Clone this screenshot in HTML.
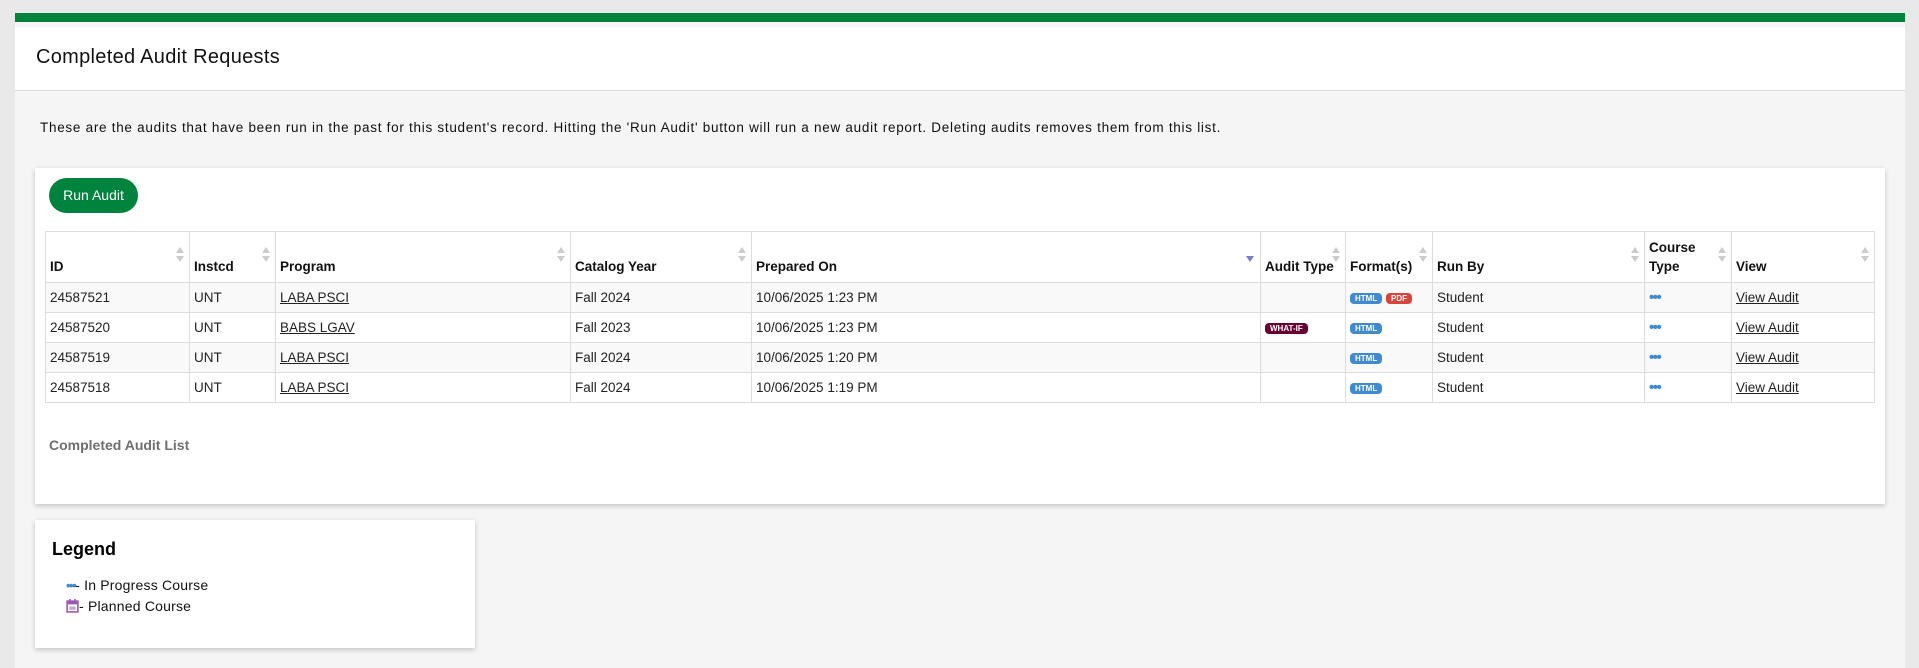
<!DOCTYPE html>
<html><head><meta charset="utf-8"><style>
*{box-sizing:border-box;margin:0;padding:0}
body{width:1919px;height:668px;background:#e9e9e9;font-family:"Liberation Sans",sans-serif;color:#222;position:relative;overflow:hidden}
.page{position:absolute;left:15px;top:13px;width:1890px;height:655px;background:#f5f5f5}
.green{position:absolute;left:0;top:0;width:100%;height:9px;background:#00843d}
.hdr{position:absolute;left:0;top:14px;width:100%;height:64px;background:#fff;border-bottom:1px solid #ddd}
.hdr h1{position:absolute;left:21px;top:19px;font-size:20px;font-weight:normal;color:#111;letter-spacing:0.3px}
.desc{position:absolute;left:25px;top:107px;font-size:13.5px;color:#111;letter-spacing:0.72px}
.card{position:absolute;left:20px;top:155px;width:1850px;height:336px;background:#fff;box-shadow:0 2px 5px rgba(0,0,0,.2)}
.btn{position:absolute;left:14px;top:10px;width:89px;height:35px;border-radius:18px;background:#00843d;color:#fff;font-size:14px;line-height:35px;text-align:center}
table{position:absolute;left:10px;top:63px;width:1830px;border-collapse:collapse;font-size:13.5px}
td,th{border:1px solid #ddd;padding:0 4px;text-align:left;vertical-align:middle;height:30px;position:relative}
th{height:51px;vertical-align:bottom;padding-bottom:6px;font-weight:bold;color:#111;line-height:19px}
tbody tr:nth-child(odd){background:#f9f9f9}
a{color:#222;text-decoration:underline}
.s{position:absolute;right:5px;top:15px;width:8px;height:16px}
.s:before{content:"";position:absolute;left:0;top:0;border:4px solid transparent;border-bottom:6px solid #ccc;border-top:0}
.s:after{content:"";position:absolute;left:0;top:9px;border:4px solid transparent;border-top:6px solid #ccc;border-bottom:0}
.dn{position:absolute;right:6px;top:24px;border:4px solid transparent;border-top:6px solid #7b7bd6;border-bottom:0}
.b{display:inline-block;font-size:8px;font-weight:bold;color:#fff;border-radius:4px;padding:0 5px;line-height:11px;vertical-align:middle}
.h{background:#3f8ad0}.p{background:#d9443e}.w{background:#6a0032}
.dots{color:#3f8ad0;font-weight:bold;font-size:15px;letter-spacing:-1.5px}
.cal{position:absolute;left:20px;top:417px;font-size:14px;font-weight:bold;color:#6f6f6f}
.leg{position:absolute;left:20px;top:507px;width:440px;height:128px;background:#fff;box-shadow:0 2px 5px rgba(0,0,0,.2)}
.leg h2{position:absolute;left:17px;top:19px;font-size:18px;font-weight:bold;color:#000}
.leg div{position:absolute;left:31px;font-size:14px;color:#111;letter-spacing:0.2px}
</style></head><body>
<div class="page">
<div class="green"></div>
<div class="hdr"><h1>Completed Audit Requests</h1></div>
<div class="desc">These are the audits that have been run in the past for this student's record. Hitting the 'Run Audit' button will run a new audit report. Deleting audits removes them from this list.</div>
<div class="card">
<div class="btn">Run Audit</div>
<table>
<colgroup><col style="width:144px"><col style="width:86px"><col style="width:295px"><col style="width:181px"><col style="width:509px"><col style="width:85px"><col style="width:87px"><col style="width:212px"><col style="width:87px"><col></colgroup>
<thead><tr><th>ID<span class="s"></span></th><th>Instcd<span class="s"></span></th><th>Program<span class="s"></span></th><th>Catalog Year<span class="s"></span></th><th>Prepared On<span class="dn"></span></th><th>Audit Type<span class="s"></span></th><th>Format(s)<span class="s"></span></th><th>Run By<span class="s"></span></th><th>Course<br>Type<span class="s"></span></th><th>View<span class="s"></span></th></tr></thead>
<tbody>
<tr><td>24587521</td><td>UNT</td><td><a>LABA PSCI</a></td><td>Fall 2024</td><td>10/06/2025 1:23 PM</td><td></td><td><span class="b h">HTML</span> <span class="b p">PDF</span></td><td>Student</td><td class="dots">•••</td><td><a>View Audit</a></td></tr>
<tr><td>24587520</td><td>UNT</td><td><a>BABS LGAV</a></td><td>Fall 2023</td><td>10/06/2025 1:23 PM</td><td><span class="b w">WHAT-IF</span></td><td><span class="b h">HTML</span></td><td>Student</td><td class="dots">•••</td><td><a>View Audit</a></td></tr>
<tr><td>24587519</td><td>UNT</td><td><a>LABA PSCI</a></td><td>Fall 2024</td><td>10/06/2025 1:20 PM</td><td></td><td><span class="b h">HTML</span></td><td>Student</td><td class="dots">•••</td><td><a>View Audit</a></td></tr>
<tr><td>24587518</td><td>UNT</td><td><a>LABA PSCI</a></td><td>Fall 2024</td><td>10/06/2025 1:19 PM</td><td></td><td><span class="b h">HTML</span></td><td>Student</td><td class="dots">•••</td><td><a>View Audit</a></td></tr>
</tbody></table>
</div>
<div class="cal" style="left:34px;top:424px">Completed Audit List</div>
<div class="leg"><h2>Legend</h2>
<div style="top:57px"><span class="dots" style="font-size:13px">•••</span>- In Progress Course</div>
<div style="top:78px"><svg width="13" height="14" viewBox="0 0 12 13" style="vertical-align:-2px"><rect x="1" y="2" width="10" height="10" fill="none" stroke="#9b59b6" stroke-width="1.5"/><rect x="1" y="2" width="10" height="3" fill="#9b59b6"/><rect x="3" y="0" width="1.5" height="3" fill="#9b59b6"/><rect x="7.5" y="0" width="1.5" height="3" fill="#9b59b6"/><rect x="3" y="7" width="6" height="3" fill="#c9a3db"/></svg>- Planned Course</div>
</div>
</div>
</body></html>
